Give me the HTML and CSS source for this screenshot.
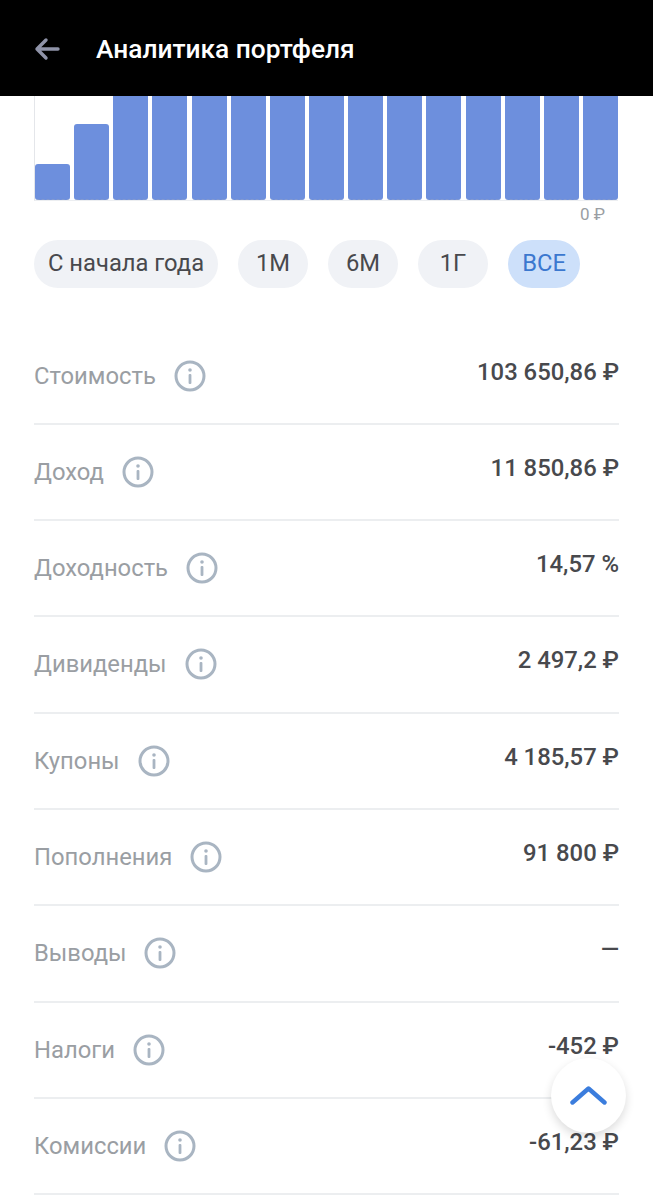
FILE: index.html
```html
<!DOCTYPE html>
<html lang="ru">
<head>
<meta charset="utf-8">
<title>Аналитика портфеля</title>
<link rel="stylesheet" href="styles.css">
</head>
<body>
<div class="screen">
  <header class="topbar">
    <svg class="back" width="28" height="28" viewBox="0 0 28 28" fill="none"><path d="M25 14H4M13 5l-9 9 9 9" stroke="#8f93a8" stroke-width="3.4" stroke-linecap="round" stroke-linejoin="round"/></svg>
    <h1 class="title">Аналитика портфеля</h1>
  </header>
  <section class="chart">
    <div class="bars">
      <div class="bar bar-a"></div><div class="bar bar-b"></div>
      <div class="bar"></div><div class="bar"></div><div class="bar"></div><div class="bar"></div><div class="bar"></div><div class="bar"></div>
      <div class="bar"></div><div class="bar"></div><div class="bar"></div><div class="bar"></div><div class="bar"></div><div class="bar"></div><div class="bar"></div>
    </div>
    <div class="zero">0 ₽</div>
  </section>
  <nav class="pills">
    <span class="pill">С начала года</span>
    <span class="pill">1М</span>
    <span class="pill">6М</span>
    <span class="pill">1Г</span>
    <span class="pill pill-on">ВСЕ</span>
  </nav>
  <section class="rows">
    <div class="row"><div class="label">Стоимость<svg class="info" viewBox="0 0 32 32"><use href="#i"/></svg></div><div class="value">103 650,86 ₽</div></div>
    <div class="row"><div class="label">Доход<svg class="info" viewBox="0 0 32 32"><use href="#i"/></svg></div><div class="value">11 850,86 ₽</div></div>
    <div class="row"><div class="label">Доходность<svg class="info" viewBox="0 0 32 32"><use href="#i"/></svg></div><div class="value">14,57 %</div></div>
    <div class="row"><div class="label">Дивиденды<svg class="info" viewBox="0 0 32 32"><use href="#i"/></svg></div><div class="value">2 497,2 ₽</div></div>
    <div class="row"><div class="label">Купоны<svg class="info" viewBox="0 0 32 32"><use href="#i"/></svg></div><div class="value">4 185,57 ₽</div></div>
    <div class="row"><div class="label">Пополнения<svg class="info" viewBox="0 0 32 32"><use href="#i"/></svg></div><div class="value">91 800 ₽</div></div>
    <div class="row"><div class="label">Выводы<svg class="info" viewBox="0 0 32 32"><use href="#i"/></svg></div><div class="value">—</div></div>
    <div class="row"><div class="label">Налоги<svg class="info" viewBox="0 0 32 32"><use href="#i"/></svg></div><div class="value">-452 ₽</div></div>
    <div class="row"><div class="label">Комиссии<svg class="info" viewBox="0 0 32 32"><use href="#i"/></svg></div><div class="value">-61,23 ₽</div></div>
  </section>
  <button class="up" type="button" aria-label="Наверх">
    <svg width="38" height="22" viewBox="0 0 38 22" fill="none"><path d="M2.5 17.5L18.5 3.500l16 14" stroke="#3b7ddd" stroke-width="4.400" stroke-linecap="round" stroke-linejoin="round"/></svg>
  </button>
</div>
<svg class="defs" width="0" height="0"><defs><g id="i"><circle cx="16" cy="16" r="14" fill="none" stroke="#a9b5c2" stroke-width="3"/><rect x="14.6" y="14" width="2.8" height="10" rx="1" fill="#a9b5c2"/><circle cx="16" cy="10" r="1.8" fill="#a9b5c2"/></g></defs></svg>
</body>
</html>
```
FILE: styles.css
```css
* { box-sizing: border-box; }
html, body { margin: 0; padding: 0; background: #fff; }
body { font-family: Roboto, "Liberation Sans", sans-serif; overflow: hidden; }
.screen { position: relative; width: 653px; height: 1200px; overflow: hidden; }
.defs { position: absolute; }

.topbar { height: 96px; background: #000; display: flex; align-items: center; padding: 2px 0 0 33px; }
.back { flex: none; margin-right: 35px; }
.title { margin: 0; color: #fff; font-size: 26.3px; font-weight: 500; line-height: 32px; }

.chart { padding: 0 35px 0 34px; }
.bars { height: 105px; display: flex; gap: 4.2px; align-items: flex-end; border-left: 1px solid #e4e6ea; border-bottom: 1px solid #eceef1; }
.bar { flex: 1; height: 104px; background: #6d8fdd; border-radius: 0 0 3px 3px; border-bottom: 1px dashed #8299cf; }
.bar-a { height: 36px; border-radius: 3px; }
.bar-b { height: 76px; border-radius: 3px; }
.zero { height: 26px; padding: 3px 13px 0 0; text-align: right; font-size: 17px; line-height: 20px; color: #9a9ea3; }

.pills { display: flex; gap: 20px; padding: 13px 0 0 34px; }
.pill { height: 48px; padding: 0 14px; border-radius: 24px; background: #f0f2f6; color: #48494d; font-size: 23.75px; line-height: 47px; white-space: nowrap; }
.pill:nth-child(n+2):nth-child(-n+4) { width: 70px; padding: 0; text-align: center; }
.pill-on { background: #cde0fa; color: #3b78cf; width: 72px; padding: 0; text-align: center; }

.rows { padding: 40.5px 34px 0; }
.row { height: 96.33px; display: flex; justify-content: space-between; border-bottom: 2px solid #eceef0; }
.label { display: flex; align-items: center; height: 94px; color: #9a9ea3; font-size: 23.8px; line-height: 32px; }
.info { width: 32px; height: 32px; margin-left: 18px; flex: none; }
.value { padding-top: 27px; color: #48494d; font-size: 23.85px; font-weight: 500; line-height: 32px; white-space: nowrap; }

.up { position: absolute; left: 551px; top: 1058px; width: 75px; height: 75px; padding: 0; border: 0; border-radius: 50%; background: #fff; box-shadow: 0 4px 10px rgba(0,0,0,.14); display: flex; align-items: center; justify-content: center; }
```
